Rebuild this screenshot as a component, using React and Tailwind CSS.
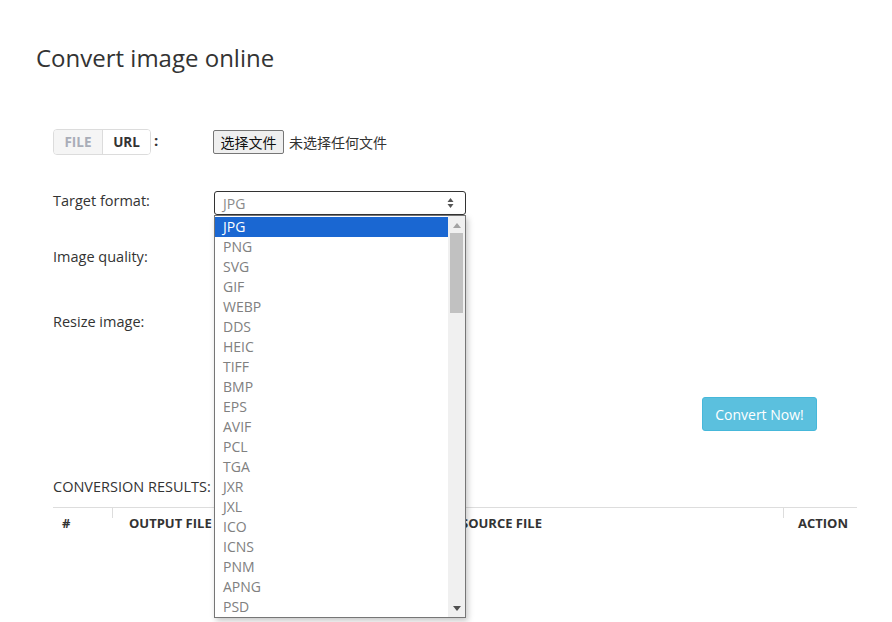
import { useState } from 'react';

const formats = [
  'JPG', 'PNG', 'SVG', 'GIF', 'WEBP', 'DDS', 'HEIC', 'TIFF', 'BMP', 'EPS',
  'AVIF', 'PCL', 'TGA', 'JXR', 'JXL', 'ICO', 'ICNS', 'PNM', 'APNG', 'PSD',
];

const FormatDropdown = ({ selected }) => {
  return (
    <div className="absolute left-[214px] top-[215px] w-[252px] h-[403px] bg-white border border-[#767676] shadow-[2px_3px_6px_rgba(0,0,0,0.22)] flex">
      <ul className="flex-1 pt-[1px]">
        {formats.map((f) => (
          <li
            key={f}
            className={`h-[20px] pl-[8px] text-[14px] leading-[20px] ${
              f === selected ? 'bg-[#1a67d2] text-white' : 'text-[#808080]'
            }`}
          >
            {f}
          </li>
        ))}
      </ul>
      {/* scrollbar */}
      <div className="w-[17px] bg-[#f0f0f0] flex flex-col items-center">
        <svg className="mt-[7px]" width="8" height="5" viewBox="0 0 8 5">
          <path d="M0 5L4 0L8 5Z" fill="#a3a3a3" />
        </svg>
        <div className="mt-[5px] w-[13px] h-[80px] bg-[#c1c1c1]"></div>
        <div className="flex-1"></div>
        <svg className="mb-[6px]" width="8" height="5" viewBox="0 0 8 5">
          <path d="M0 0L8 0L4 5Z" fill="#505050" />
        </svg>
      </div>
    </div>
  );
};

const App = () => {
  const [mode, setMode] = useState('file');
  const [format] = useState('JPG');

  return (
    <div className="relative h-[622px] overflow-hidden bg-white font-['Open_Sans',sans-serif] text-[#333]">
      <div className="pl-[36px] pr-[35px]">
        <h1 className="pt-[42px] text-[24px] leading-[32px] font-normal text-[#333]">
          Convert image online
        </h1>

        <div className="pl-[17px]">
          {/* source row */}
          <div className="mt-[55px] flex items-center h-[26px]">
            <div className="w-[160px] flex items-center">
              <div className="flex h-[26px] border border-[#dcdcdc] rounded-[4px] overflow-hidden text-[13.5px] font-bold">
                <button
                  onClick={() => setMode('file')}
                  className={`w-[49px] border-r border-[#dcdcdc] ${
                    mode === 'file' ? 'bg-[#f5f5f5] text-[#a9adb8]' : 'bg-white text-[#333]'
                  }`}
                >
                  FILE
                </button>
                <button
                  onClick={() => setMode('url')}
                  className={`w-[47px] ${
                    mode === 'url' ? 'bg-[#f5f5f5] text-[#a9adb8]' : 'bg-white text-[#333]'
                  }`}
                >
                  URL
                </button>
              </div>
              <span className="ml-[3px] font-bold text-[15px] -mt-[3px]">:</span>
            </div>
            <div className="flex items-center font-['Noto_Sans_CJK_SC',sans-serif] text-[14px]">
              <button className="h-[24px] w-[71px] bg-[#efefef] border border-[#767676] rounded-[2px] text-[#111] leading-none">
                选择文件
              </button>
              <span className="ml-[5px] text-[#333]">未选择任何文件</span>
            </div>
          </div>

          {/* target format */}
          <div className="mt-[36px] flex h-[24px]">
            <label className="w-[161px] text-[14.5px] leading-[20px]">Target format:</label>
            <div className="w-[252px] h-[24px] border border-[#333] rounded-[3px] flex items-center justify-between pl-[8px] pr-[11px] text-[14px] text-[#8a8a8a]">
              <span>JPG</span>
              <svg width="7" height="12" viewBox="0 0 7 12">
                <path d="M0.5 5L3.5 1L6.5 5Z" fill="#555" />
                <path d="M0.5 7L6.5 7L3.5 11Z" fill="#555" />
              </svg>
            </div>
          </div>

          {/* image quality */}
          <div className="mt-[32px] flex h-[36px]">
            <label className="w-[161px] text-[14.5px] leading-[20px]">Image quality:</label>
            <div className="w-[252px] h-[36px] border border-[#ccc] rounded-[3px]"></div>
          </div>

          {/* resize */}
          <div className="mt-[29px] flex h-[40px]">
            <label className="w-[161px] text-[14.5px] leading-[20px]">Resize image:</label>
            <div className="w-[252px] h-[36px] border border-[#ccc] rounded-[3px]"></div>
          </div>

          <div className="mt-[45px] flex justify-end pr-[40px]">
            <button className="h-[34px] w-[115px] bg-[#5bc0de] border border-[#46b8da] rounded-[3px] text-white text-[14px]">
              Convert Now!
            </button>
          </div>

          <div className="mt-[46px] text-[14.5px] leading-[20px] text-[#333]">CONVERSION RESULTS:</div>

          <div className="mt-[10px] border-t border-[#ddd] flex text-[13px] font-bold text-[#333] uppercase">
            <div className="w-[59px] pl-[9px] pt-[6px]">#</div>
            <div className="w-px h-[10px] bg-[#ddd]"></div>
            <div className="w-[332px] pl-[16px] pt-[6px]">Output file</div>
            <div className="w-[338px] pl-[16px] pt-[6px]">Source file</div>
            <div className="w-px h-[10px] bg-[#ddd]"></div>
            <div className="flex-1 pl-[14px] pt-[6px]">Action</div>
          </div>
        </div>
      </div>

      <FormatDropdown selected={format} />
    </div>
  );
};

export default App;
